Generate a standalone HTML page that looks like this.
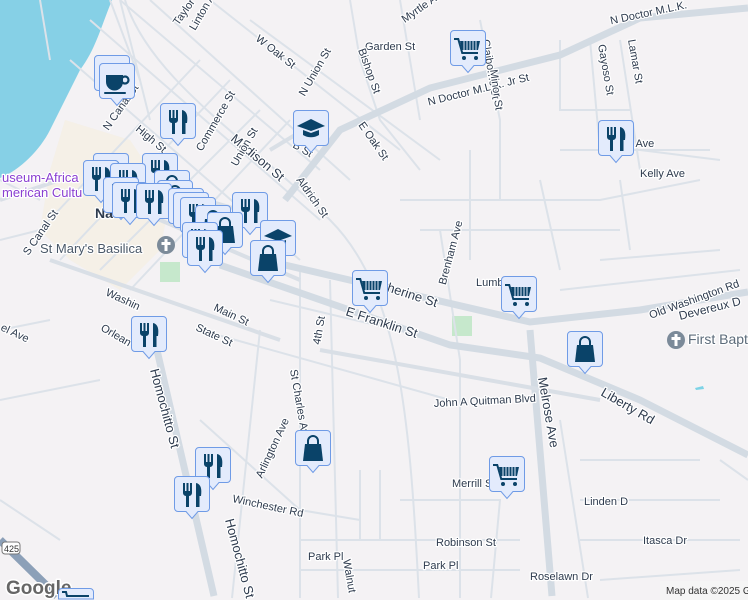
<!DOCTYPE html>
<html><head><meta charset="utf-8"><style>
html,body{margin:0;padding:0;width:748px;height:600px;overflow:hidden;background:#f4f2f4}
svg{display:block;position:absolute;left:0;top:0}
text{font-family:"Liberation Sans",sans-serif;font-size:11px;fill:#2e3b4e;paint-order:stroke;stroke:#fff;stroke-width:2.5px;stroke-linejoin:round}
</style></head><body>
<svg width="748" height="600" viewBox="0 0 748 600" xmlns="http://www.w3.org/2000/svg">
<defs>
<g id="box"><path d="M4 0.5h28a3.5 3.5 0 0 1 3.5 3.5v28a3.5 3.5 0 0 1 -3.5 3.5h-8l-6 7-6-7h-8a3.5 3.5 0 0 1 -3.5-3.5v-28a3.5 3.5 0 0 1 3.5-3.5z" fill="#e3ebfc" stroke="#6f9be6" stroke-width="1"/></g>
<g id="fork" fill="#0a4369"><rect x="9" y="7" width="2" height="9"/><rect x="12.5" y="7" width="2" height="9"/><rect x="16" y="7" width="2" height="9"/><path d="M9 15h9v2a3 3 0 0 1-3 3v11h-3v-11a3 3 0 0 1-3-3z"/><path d="M22 7c5 1 6 6 5 13h-1.5v11h-3.5z"/></g>
<g id="cart" fill="#0a4369"><path d="M4 8h5l4 14h15v2h-16.5l-4-14h-3.5z"/><path d="M10 11h20l-2 9h-16z"/><g stroke="#e3ebfc" stroke-width="1"><path d="M14 11v9M17 11v9M20 11v9M23 11v9M26 11v9"/></g><circle cx="14" cy="28" r="2"/><circle cx="26" cy="28" r="2"/></g>
<g id="bag" fill="#0a4369"><path d="M10 14h16l2 17h-20z"/><path d="M13 15v-4a5 5 0 0 1 10 0v4" fill="none" stroke="#0a4369" stroke-width="2"/></g>
<g id="cup" fill="#0a4369"><path d="M7 12h17v7a8.5 8.5 0 0 1-17 0z"/><circle cx="26" cy="17" r="3.5" fill="none" stroke="#0a4369" stroke-width="2.2"/><rect x="5" y="29" width="22" height="2" rx="1"/></g>
<g id="grad" fill="#0a4369"><path d="M4 16l14-7 14 7-14 5z"/><path d="M10 20l8 3 8-3v5c-5 3-11 3-16 0z"/></g>
</defs>

<path d="M0 0H112C100 30 95 50 80 70 70 90 60 110 50 130 40 150 20 170 0 178z" fill="#86d0e6"/>
<path d="M65 120L130 140 170 200 160 250 120 290 70 260 40 230 50 170z" fill="#f5eeda" opacity="0.5"/>
<rect x="452" y="316" width="20" height="20" fill="#c6e8cc"/>
<rect x="160" y="262" width="20" height="20" fill="#c6e8cc"/>

<g stroke="#dce2e9" stroke-width="2" fill="none">
<path d="M120 0L320 170M150 0L350 180M70 60L300 260M90 20L320 220M210 0L400 150M250 20L440 160"/>
<path d="M40 230L200 60M60 260L230 80M100 270L260 110M130 290L290 120"/>
<path d="M350 0L360 60L380 120L420 170M400 0L410 60L420 120M480 20L500 120L500 200M560 40L560 110L630 110M590 40L600 150M620 40L640 170M640 150L720 160M560 150L710 150"/>
<path d="M400 200L600 200L700 180M420 230L620 230M470 150L470 260M540 180L560 270M620 180L630 250M600 260L720 250M560 290L740 270"/>
<path d="M440 230L460 360L460 598M300 270L300 598M260 330L232 598M330 280L338 598M400 500L500 500L491 598M300 540L520 540M300 570L520 570M560 420L588 598M580 460L700 460M580 500L720 500M580 540L740 540M600 580L740 570M720 460L748 480M0 240L40 230M0 330L50 320M200 420L300 510L360 520M380 470L380 540M360 470L360 540"/>
<path d="M40 0L50 60M120 0L150 120M160 150L200 260M200 330L450 400M270 300L460 345" />
<path d="M0 180L40 200M0 400L100 380M110 0L140 80M0 500L60 540"/>
<path d="M125 0C150 80 250 140 330 220 400 290 410 420 419 598"/>
</g>
<g stroke="#d3dbe3" stroke-width="7" fill="none">
<path d="M285 200L340 130 430 88 560 55 640 18 748 8"/>
<path d="M220 265L450 345 540 358 640 400 748 455"/>
<path d="M285 265L530 322 640 310 748 292"/>
<path d="M530 330L552 596"/>
<path d="M150 320L214 596"/>
</g>
<g stroke="#d9dfe6" stroke-width="4" fill="none">
<path d="M90 190L300 280M50 260L280 340M0 200L60 180M205 200L240 210M320 350L600 400M270 150L320 120"/>
</g>
<path d="M0 540L57 596" stroke="#8ca0b8" stroke-width="8"/>

<g>
<text x="610" y="15" transform="rotate(-12 655 15)">N Doctor M.L.K.</text>
<text x="425" y="95" transform="rotate(-14 470 85)">N Doctor M.L.K. Jr St</text>
<text x="365" y="50">Garden St</text>
<text x="482" y="40" transform="rotate(80 482 40)">Claiborne St</text>
<text x="490" y="70" transform="rotate(82 490 70)">Minor St</text>
<text x="598" y="45" transform="rotate(80 598 45)">Gayoso St</text>
<text x="628" y="40" transform="rotate(80 628 40)">Lamar St</text>
<text x="400" y="12" transform="rotate(-35 420 10)">Myrtle Ave</text>
<text x="255" y="40" transform="rotate(38 255 40)">W Oak St</text>
<text x="292" y="95" transform="rotate(-60 300 85)">N Union St</text>
<text x="358" y="50" transform="rotate(70 358 50)">Bishop St</text>
<text x="358" y="125" transform="rotate(55 358 125)">E Oak St</text>
<text x="292" y="147" transform="rotate(30 292 147)">B St</text>
<text x="230" y="140" transform="rotate(40 230 140)" style="font-size:13px">Madison St</text>
<text x="296" y="180" transform="rotate(55 296 180)">Aldrich St</text>
<text x="622" y="147">sk Ave</text>
<text x="640" y="177">Kelly Ave</text>
<text x="430" y="285" transform="rotate(-75 438 275)">Brenham Ave</text>
<text x="476" y="286">Lumb</text>
<text x="383" y="290" transform="rotate(18 383 290)" style="font-size:13px">therine St</text>
<text x="645" y="304" transform="rotate(-20 690 295)">Old Washington Rd</text>
<text x="680" y="320" transform="rotate(-14 680 320)" style="font-size:12px">Devereux D</text>
<text x="688" y="344" style="font-size:14px;fill:#5c6b7a">First Bapt</text>
<text x="345" y="315" transform="rotate(18 345 315)" style="font-size:13px">E Franklin St</text>
<text x="600" y="395" transform="rotate(30 600 395)" style="font-size:13px">Liberty Rd</text>
<text x="538" y="378" transform="rotate(80 538 378)" style="font-size:13px">Melrose Ave</text>
<text x="434" y="407" transform="rotate(-3 434 407)">John A Quitman Blvd</text>
<text x="290" y="370" transform="rotate(80 290 370)">St Charles Ave</text>
<text x="320" y="345" transform="rotate(-80 320 345)">4th St</text>
<text x="213" y="310" transform="rotate(25 213 310)">Main St</text>
<text x="195" y="330" transform="rotate(25 195 330)">State St</text>
<text x="105" y="295" transform="rotate(25 105 295)">Washin</text>
<text x="100" y="330" transform="rotate(30 100 330)">Orlean</text>
<text x="0" y="330" transform="rotate(25 0 330)">el Ave</text>
<text x="150" y="370" transform="rotate(75 150 370)" style="font-size:13px">Homochitto St</text>
<text x="225" y="520" transform="rotate(75 225 520)" style="font-size:13px">Homochitto St</text>
<text x="250" y="480" transform="rotate(-65 255 470)">Arlington Ave</text>
<text x="232" y="502" transform="rotate(12 232 502)">Winchester Rd</text>
<text x="452" y="487">Merrill S</text>
<text x="436" y="546">Robinson St</text>
<text x="423" y="569">Park Pl</text>
<text x="308" y="560">Park Pl</text>
<text x="343" y="560" transform="rotate(80 343 560)">Walnut</text>
<text x="530" y="580">Roselawn Dr</text>
<text x="643" y="544">Itasca Dr</text>
<text x="584" y="505">Linden D</text>
<text x="20" y="250" transform="rotate(-55 30 245)">S Canal St</text>
<text x="100" y="125" transform="rotate(-55 110 120)">N Canal St</text>
<text x="135" y="130" transform="rotate(40 135 130)">High St</text>
<text x="195" y="150" transform="rotate(-60 200 145)">Commerce St</text>
<text x="230" y="165" transform="rotate(-60 235 160)">Union St</text>
<text x="170" y="20" transform="rotate(-55 180 15)">Taylor St</text>
<text x="183" y="30" transform="rotate(-60 190 20)">Linton Av</text>
<text x="2" y="182" style="fill:#8a3fd1;font-size:13px">useum-Africa</text>
<text x="2" y="197" style="fill:#8a3fd1;font-size:13px">merican Cultu</text>
<text x="95" y="218" style="font-size:14px;font-weight:bold">Na</text>
<text x="40" y="253" style="font-size:13px;fill:#4a5868">St Mary's Basilica</text>
</g>
<rect x="660" y="581" width="88" height="19" fill="#f5f5f5" opacity="0.8"/>
<text x="666" y="594" style="font-size:10px;stroke:none;fill:#333">Map data ©2025 Google</text>
<text x="6" y="594" style="font-size:19px;font-weight:bold;fill:#666;stroke:#fff;stroke-width:3px">Google</text>
<rect x="2" y="542" width="18" height="12" rx="3" fill="#fff" stroke="#777"/>
<text x="4" y="552" style="font-size:9px;stroke:none;fill:#333">425</text>

<g transform="translate(166,245)"><circle r="9" fill="#7b8a99"/><path d="M-1.5 -6h3v3h3v3h-3v6h-3v-6h-3v-3h3z" fill="#fff"/></g>
<g transform="translate(676,340)"><circle r="9" fill="#7b8a99"/><path d="M-1.5 -6h3v3h3v3h-3v6h-3v-6h-3v-3h3z" fill="#fff"/></g>
<path d="M695 388l8-2 1 3-8 1z" fill="#7dd3e6"/>

<g transform="translate(94,55)"><use href="#box"/></g>
<g transform="translate(99,63)"><use href="#box"/><use href="#cup"/></g>
<g transform="translate(450,30)"><use href="#box"/><use href="#cart"/></g>
<g transform="translate(293,110)"><use href="#box"/><use href="#grad"/></g>
<g transform="translate(160,103)"><use href="#box"/><use href="#fork"/></g>
<g transform="translate(598,120)"><use href="#box"/><use href="#fork"/></g>
<g transform="translate(93,153)"><use href="#box"/><use href="#fork"/></g>
<g transform="translate(142,153)"><use href="#box"/><use href="#fork"/></g>
<g transform="translate(83,160)"><use href="#box"/><use href="#fork"/></g>
<g transform="translate(110,163)"><use href="#box"/><use href="#fork"/></g>
<g transform="translate(154,170)"><use href="#box"/><use href="#bag"/></g>
<g transform="translate(103,177)"><use href="#box"/><use href="#fork"/></g>
<g transform="translate(157,180)"><use href="#box"/><use href="#bag"/></g>
<g transform="translate(112,182)"><use href="#box"/><use href="#fork"/></g>
<g transform="translate(136,183)"><use href="#box"/><use href="#fork"/></g>
<g transform="translate(168,188)"><use href="#box"/><use href="#bag"/></g>
<g transform="translate(173,192)"><use href="#box"/><use href="#bag"/></g>
<g transform="translate(180,197)"><use href="#box"/><use href="#fork"/></g>
<g transform="translate(195,205)"><use href="#box"/><use href="#bag"/></g>
<g transform="translate(232,192)"><use href="#box"/><use href="#fork"/></g>
<g transform="translate(207,212)"><use href="#box"/><use href="#bag"/></g>
<g transform="translate(182,222)"><use href="#box"/><use href="#fork"/></g>
<g transform="translate(260,220)"><use href="#box"/><use href="#grad"/></g>
<g transform="translate(187,230)"><use href="#box"/><use href="#fork"/></g>
<g transform="translate(250,240)"><use href="#box"/><use href="#bag"/></g>
<g transform="translate(352,270)"><use href="#box"/><use href="#cart"/></g>
<g transform="translate(501,276)"><use href="#box"/><use href="#cart"/></g>
<g transform="translate(567,331)"><use href="#box"/><use href="#bag"/></g>
<g transform="translate(131,316)"><use href="#box"/><use href="#fork"/></g>
<g transform="translate(295,430)"><use href="#box"/><use href="#bag"/></g>
<g transform="translate(195,447)"><use href="#box"/><use href="#fork"/></g>
<g transform="translate(174,476)"><use href="#box"/><use href="#fork"/></g>
<g transform="translate(489,456)"><use href="#box"/><use href="#cart"/></g>
<path d="M58.5 599v-7a3.5 3.5 0 0 1 3.5-3.5h28a3.5 3.5 0 0 1 3.5 3.5v7z" fill="#e3ebfc" stroke="#6f9be6"/>
<path d="M62 592h4l1 4h22" stroke="#0a4369" stroke-width="2" fill="none"/>
</svg>
</body></html>
